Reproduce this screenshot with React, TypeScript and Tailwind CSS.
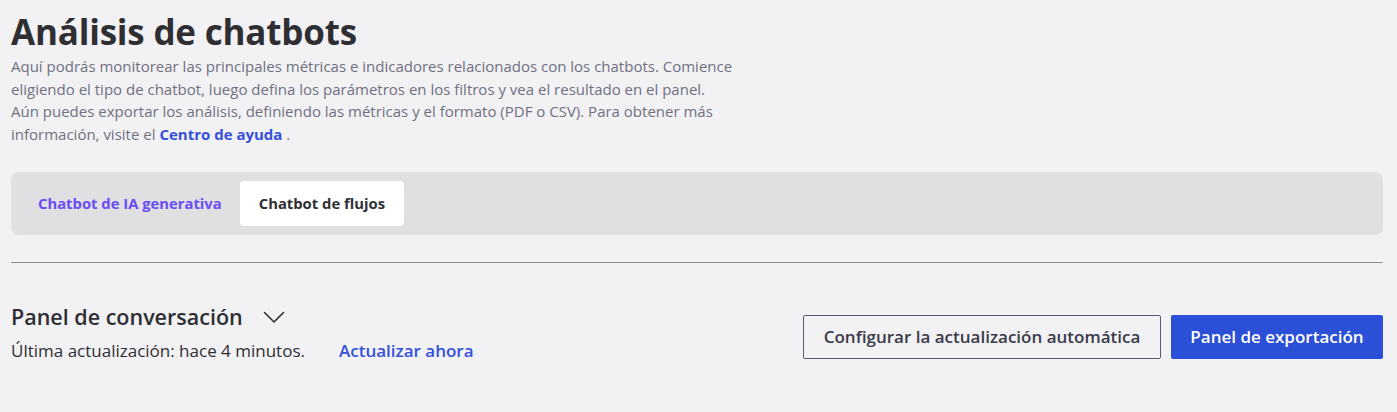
export default function App() {
  return (
    <div className="min-h-[412px] w-full bg-[#f2f2f4] pl-[11px] pr-[14px] pt-[10px] font-['Open_Sans',sans-serif]">
      <h1 className="text-[35px] font-bold leading-[44px] text-[#2f2f33] tracking-[-0.2px]">
        Análisis de chatbots
      </h1>
      <p className="mt-[1px] text-[15px] leading-[22.5px] text-[#707080]">
        Aquí podrás monitorear las principales métricas e indicadores relacionados con los chatbots. Comience
        <br />
        eligiendo el tipo de chatbot, luego defina los parámetros en los filtros y vea el resultado en el panel.
        <br />
        Aún puedes exportar los análisis, definiendo las métricas y el formato (PDF o CSV). Para obtener más
        <br />
        información, visite el <a className="font-bold text-[#3550db]">Centro de ayuda</a> .
      </p>

      <div className="mt-[27px] flex h-[63px] items-center rounded-[8px] bg-[#e0e0e2] px-[9px]">
        <button className="h-[45px] rounded-[4px] px-[18px] text-[14.8px] font-bold text-[#6a4df4]">
          Chatbot de IA generativa
        </button>
        <button className="h-[45px] rounded-[4px] bg-white px-[19px] text-[14.8px] font-bold text-[#2f2f33]">
          Chatbot de flujos
        </button>
      </div>

      <div className="mt-[27px] h-px bg-[#8c8c94]" />

      <div className="mt-[40px] flex items-start justify-between">
        <div>
          <div className="flex items-center">
            <h2 className="text-[21.5px] font-semibold leading-[28px] text-[#2f2f33]">Panel de conversación</h2>
            <svg className="ml-[20px] mt-[1px]" width="22" height="13" viewBox="0 0 22 13" fill="none">
              <polyline points="1.5,1.5 11,11 20.5,1.5" stroke="#2f2f33" strokeWidth="1.6" strokeLinecap="round" strokeLinejoin="round" />
            </svg>
          </div>
          <div className="mt-[8px] flex items-center text-[17px] leading-[24px]">
            <span className="text-[#2f2f33]">Última actualización: hace 4 minutos.</span>
            <a className="ml-[34px] font-semibold text-[#3550db]">Actualizar ahora</a>
          </div>
        </div>
        <div className="mt-[12px] flex gap-[10px]">
          <button className="h-[44px] w-[358px] rounded-[2px] border border-[#5a5a70] bg-transparent text-[17px] font-semibold text-[#3a3a48]">
            Configurar la actualización automática
          </button>
          <button className="h-[44px] w-[212px] rounded-[2px] bg-[#2b4fd6] text-[17px] font-semibold text-white">
            Panel de exportación
          </button>
        </div>
      </div>
    </div>
  )
}
